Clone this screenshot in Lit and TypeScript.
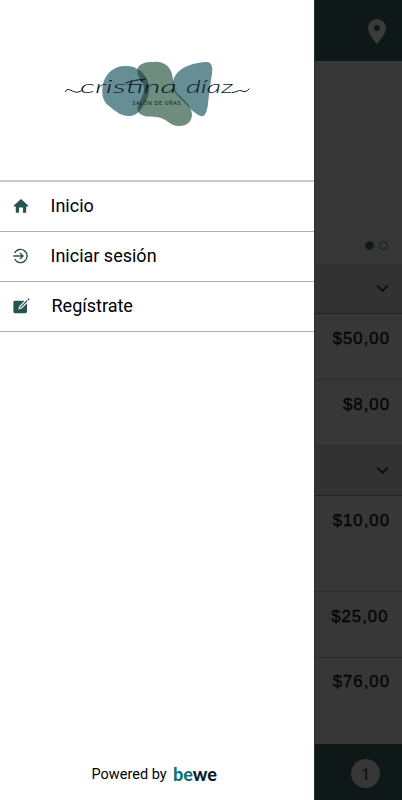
import { LitElement, html, css, svg } from "lit";
import { customElement } from "lit/decorators.js";

const homeIcon = svg`<path d="M8 1 15.2 7.6V8.4H13.2V14.8H10V9.4H6V14.8H2.8V8.4H.8V7.6Z"/>`;
const loginIcon = svg`<g fill="none" stroke="currentColor" stroke-width="1.4"><path d="M1.600 5A6.600 6.600 0 1 1 1.600 11M.3 8H9.800M7 5 10 8 7 11"/></g>`;
const editIcon = svg`<path d="M1.800 2.800H11.600L6.400 8 5.200 11.600 8.800 10.400 14 5.200V13.800Q14 15.200 12.600 15.200H1.800Q.4 15.200.4 13.800V4.200Q.4 2.800 1.800 2.800Z"/><path d="M7.200 9.600 14.200 2.600" fill="none" stroke="currentColor" stroke-width="1.300"/><path d="M15 1.800 16 .8" fill="none" stroke="currentColor" stroke-width="1.700"/>`;

const menu = [
  { label: "Inicio", icon: homeIcon, kind: "home" },
  { label: "Iniciar sesión", icon: loginIcon, kind: "login" },
  { label: "Regístrate", icon: editIcon, kind: "edit" },
];

const leftBlob = "M125 66C136 65 145 73 148 82C151 91 148 98 144 104C141 110 137 116 129 116C121 116 115 111 109 106C102 101 101 92 103.500 82C107 72 115 66 125 66Z";
const midBlob = "M153 62C163 61 170 66 172 74C174 83 173 89 178 94C184 100 191 105 192 114C192 122 187 126 179 126C170 126 167 119 159 117.500C151 116 144 118 139 113C134 107 143 99 144 90C145 82 135 77 138 68C140 63 146 62 153 62Z";
const rightBlob = "M205 62C212 61 213 67 212 74C210 86 209 95 208 104C207 112 205 117 201 116C194 114 187 105 181 99C173 92 170 85 175 76C181 66 194 63 205 62Z";

@customElement("brand-logo")
class BrandLogo extends LitElement {
  static styles = css`
    :host { display: block; }
    svg { display: block; }
    .blue { fill: #688e95; }
    .green { fill: #6f8d7e; }
    .overlap { fill: #3a5b5a; }
    .script { font: italic 300 17px Lato, sans-serif; fill: #071b26; }
    .tag { font: 500 5px Lato, sans-serif; fill: #0c2229; }
    .swash { fill: none; stroke: #071b26; stroke-width: 1; stroke-linecap: round; }
  `;
  render() {
    return html`<svg width="200" height="76" viewBox="56 58 200 76">
      <defs><clipPath id="mid"><path d=${midBlob}/></clipPath></defs>
      <path class="blue" d=${leftBlob}/>
      <path class="green" d=${midBlob}/>
      <path class="blue" d=${rightBlob}/>
      <g clip-path="url(#mid)"><path class="overlap" d=${leftBlob}/><path class="overlap" d=${rightBlob}/></g>
      <text class="script" x="80" y="93" textLength="97" lengthAdjust="spacingAndGlyphs">cristina</text>
      <text class="script" x="186" y="93" textLength="47" lengthAdjust="spacingAndGlyphs">díaz</text>
      <g class="swash">
        <path d="M65.500 91.500C67 87 71 91 75 92Q78 93 81 91"/>
        <path d="M125.500 83Q133 80 146 79"/>
        <path d="M232 92.500C236 93 239 89 242 91Q246 93 249 89"/>
      </g>
      <text class="tag" x="132.500" y="105.200" textLength="48">SALÓN DE UÑAS</text>
    </svg>`;
  }
}

@customElement("app-root")
class AppRoot extends LitElement {
  static styles = css`
    :host { display: grid; grid-template-columns: 314px 88px; height: 800px; overflow: hidden; background: #fff; font-family: Roboto, sans-serif; color: #000; }
    .drawer { display: flex; flex-direction: column; background: #fff; }
    .brand { height: 180px; padding: 58px 0 0 56px; box-sizing: border-box; }
    .menu { border-top: 2px solid #cacaca; }
    .entry { display: flex; align-items: center; height: 50px; box-sizing: border-box; border-bottom: 1px solid #b0b0b0; padding: 0 0 1px 13px; gap: 21.500px; font-size: 18px; }
    .entry svg { width: 16px; height: 16px; color: #285354; fill: currentColor; flex: none; overflow: visible; }
    .entry span { padding-bottom: 2px; }
    .edit { gap: 22.500px; }
    .powered { margin-top: auto; height: 53px; display: flex; align-items: center; padding-left: 91.500px; gap: 5px; font-size: 14.500px; }
    .bewe { font: 900 18px Lato, sans-serif; fill: #081c2a; overflow: visible; }
    .bewe .b { fill: #127278; }
    .page { display: flex; flex-direction: column; background: #373737; border-left: 1px solid #303030; color: #050505; }
    .top { height: 61px; box-sizing: border-box; background: #0e1817; display: flex; justify-content: flex-end; padding: 19px 16px 0 0; }
    .hero { height: 203px; box-sizing: border-box; display: flex; justify-content: flex-end; align-items: flex-end; gap: 5px; padding: 0 14.500px 14px 0; }
    .dot { width: 9px; height: 9px; box-sizing: border-box; border-radius: 50%; border: 1.500px solid #102020; }
    .dot.on { background: #0e1b1b; }
    .group { height: 50px; box-sizing: border-box; background: #323232; border-bottom: 1px solid #222; display: flex; align-items: center; justify-content: flex-end; padding-right: 13px; }
    .price { box-sizing: border-box; padding: 15px 12px 0 0; text-align: right; font: 16.800px/20px "Liberation Sans", sans-serif; letter-spacing: 1px; border-bottom: 1px solid #2c2c2c; -webkit-text-stroke: .350px #050505; }
    .h66 { height: 66px; }
    .h96 { height: 96px; }
    .wide { padding-right: 13.500px; }
    .last { height: 86px; padding-top: 14px; border: 0; }
    .bar { height: 57px; background: #0e1817; display: flex; align-items: center; justify-content: flex-end; padding: 2px 22px 0 0; box-sizing: border-box; }
    .count { width: 29px; height: 29px; border-radius: 50%; background: #373737; color: #0e1817; display: grid; place-items: center; font: 500 17px Roboto, sans-serif; }
  `;
  chevron() {
    return html`<svg width="13" height="9" viewBox="0 0 13 9"><path d="M1.200 1.500 6.500 6.800 11.800 1.500" fill="none" stroke="#080808" stroke-width="1.700"/></svg>`;
  }
  render() {
    return html`
      <nav class="drawer">
        <div class="brand"><brand-logo></brand-logo></div>
        <div class="menu">
          ${menu.map((m) => html`<div class="entry ${m.kind}"><svg viewBox="0 0 16 16">${m.icon}</svg><span>${m.label}</span></div>`)}
        </div>
        <div class="powered"><span>Powered by</span>
          <svg class="bewe" width="52" height="28" viewBox="0 0 52 28"><text x="1" y="19.500" textLength="44" lengthAdjust="spacingAndGlyphs"><tspan class="b">be</tspan><tspan>we</tspan></text></svg>
        </div>
      </nav>
      <main class="page">
        <div class="top"><svg width="18" height="25" viewBox="0 0 18 25"><path fill="#3b3b3b" fill-rule="evenodd" d="M9 0A9 9 0 0 1 18 9C18 14 13 20.500 9 25C5 20.500 0 14 0 9A9 9 0 0 1 9 0ZM9 6A3 3 0 1 0 9 12A3 3 0 1 0 9 6Z"/></svg></div>
        <div class="hero"><i class="dot on"></i><i class="dot"></i></div>
        <div class="group">${this.chevron()}</div>
        <div class="price h66">$50,00</div>
        <div class="price h66">$8,00</div>
        <div class="group">${this.chevron()}</div>
        <div class="price h96">$10,00</div>
        <div class="price h66 wide">$25,00</div>
        <div class="price last">$76,00</div>
        <div class="bar"><div class="count">1</div></div>
      </main>`;
  }
}
